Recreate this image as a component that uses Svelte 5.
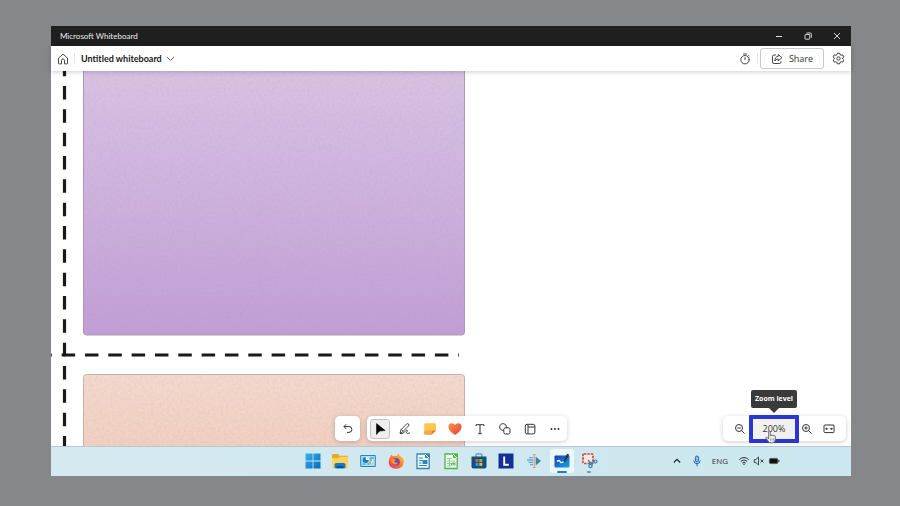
<script>
  let selected = $state('select');
  const tools = ['select', 'pen', 'note', 'reaction', 'text', 'shape', 'template', 'more'];
  const apps = ['start', 'files', 'control', 'firefox', 'writer', 'calc', 'store', 'l', 'mirror', 'whiteboard', 'snip'];
</script>

<svelte:head><title>Microsoft Whiteboard</title></svelte:head>

<div class="desktop">
  <main class="window">
    <div class="titlebar">
      <span class="grow">Microsoft Whiteboard</span>
      <button aria-label="Minimize"><svg width="10" height="10" viewBox="0 0 10 10"><path d="M2 5.500h6" stroke="#ddd" /></svg></button>
      <button aria-label="Restore"><svg width="10" height="10" viewBox="0 0 10 10" fill="none" stroke="#e8e8e8" stroke-width=".9"><rect x="2" y="3.500" width="4.700" height="4.700" rx=".6" /><path d="M3.500 2h3.800q1 0 1 1v3.800" /></svg></button>
      <button aria-label="Close"><svg width="10" height="10" viewBox="0 0 10 10"><path d="M2 2l6 6M8 2l-6 6" stroke="#e8e8e8" stroke-width=".9" /></svg></button>
    </div>

    <header>
      <button class="home" aria-label="Home"><svg width="12" height="12" viewBox="0 0 12 12" fill="none" stroke="#333" stroke-width=".9" stroke-linejoin="round"><path d="M1.500 5.100 6 1l4.500 4.100v5.200q0 .6-.6.6H7.500V7.500Q7.500 6 6 6T4.500 7.500v3.400H2.100q-.6 0-.6-.6z" /></svg></button>
      <i class="rule"></i>
      <button class="name"><b>Untitled whiteboard</b><svg width="9" height="9" viewBox="0 0 9 9"><path d="m1 3 3.500 3.500L8 3" fill="none" stroke="#555" stroke-width=".9" /></svg></button>
      <span class="grow"></span>
      <button class="timer" aria-label="Timer"><svg width="12" height="12" viewBox="0 0 12 12" fill="none" stroke="#333" stroke-width=".9" stroke-linecap="round"><circle cx="6" cy="6.700" r="4.200" /><path d="M6 4.500v2.300M4.500 1h3M9.400 2.200l.9.9" /></svg></button>
      <i class="rule"></i>
      <button class="share"><svg width="12" height="12" viewBox="0 0 12 12" fill="none" stroke="#333" stroke-width=".9" stroke-linejoin="round"><path d="M5 2H3Q1.500 2 1.500 3.500v5.500Q1.500 10.500 3 10.500h5.500Q10 10.500 10 9V8.300" /><path d="M7.200 1.500 11 4.700 7.200 7.800V6Q4.900 5.900 3.800 8 3.800 3.600 7.200 3.400z" /></svg>Share</button>
      <button class="settings" aria-label="Settings"><svg width="13" height="13" viewBox="0 0 13 13" fill="none" stroke="#333" stroke-width=".95" stroke-linejoin="round"><path d="m5.300 1.200h2.400l.4 1.500 1 .6 1.500-.5 1.200 2.100-1.100 1.100v1l1.100 1.100-1.200 2.100-1.500-.5-1 .6-.4 1.500H5.300l-.4-1.500-1-.6-1.500.5-1.200-2.100L2.300 7V6L1.200 4.900l1.200-2.100 1.500.5 1-.6z" /><circle cx="6.500" cy="6.500" r="1.700" /></svg></button>
    </header>

    <section class="board" aria-label="Whiteboard canvas">
      <svg class="drawing" width="420" height="100%" aria-hidden="true">
        <defs>
          <linearGradient id="purple" x1="0" y1="0" x2="0" y2="1"><stop stop-color="#dac5e5" /><stop offset=".5" stop-color="#ceb3de" /><stop offset="1" stop-color="#c29ed6" /></linearGradient>
          <linearGradient id="peach" x1="0" y1="0" x2="0" y2="1"><stop stop-color="#f4dacd" /><stop offset="1" stop-color="#f0cab8" /></linearGradient>
          <filter id="paper" x="0" y="0" width="100%" height="100%"><feTurbulence type="fractalNoise" baseFrequency=".37" numOctaves="3" seed="9" /><feColorMatrix values="0 0 0 0 .4  0 0 0 0 .25  0 0 0 0 .4  .22 0 0 0 -.07" /><feComposite in2="SourceAlpha" operator="in" /></filter>
        </defs>
        <rect x="32.500" y="-20" width="381" height="284" rx="3" fill="url(#purple)" stroke="#ae98b8" />
        <rect x="33" y="-20" width="380" height="284" rx="3" filter="url(#paper)" />
        <rect x="32.500" y="303.500" width="381" height="120" rx="3" fill="url(#peach)" stroke="#c5b1a8" />
        <rect x="33" y="304" width="380" height="119" rx="3" filter="url(#paper)" />
        <path d="M13.500-8.300V400" stroke="#191919" stroke-width="3.200" stroke-dasharray="13.500 9.830" />
        <path d="M-12.700 284H408" stroke="#191919" stroke-width="3.200" stroke-dasharray="13.500 9.830" />
      </svg>

      <div class="docks">
        <div class="dock undo"><button aria-label="Undo"><svg width="12" height="12" viewBox="0 0 12 12" fill="none" stroke="#333"><path d="M4.200 1.300 1.900 3.600l2.300 2.300M2 3.600h5a2.900 2.900 0 0 1 0 5.800H5" /></svg></button></div>
        <div class="dock tools">
          {#each tools as tool}
            <button aria-label={tool} class:selected={selected === tool} onclick={() => (selected = tool)}>
              <svg width="14" height="14" viewBox="0 0 14 14" fill="none" stroke="#333" stroke-linejoin="round">
                {#if tool === 'select'}<path d="M3.500 1.500v11L6.600 9l5.600-.5z" fill="#000" stroke="#000" stroke-width=".5" />
                {:else if tool === 'pen'}<path d="m2 11.500.8-3.600L8.600 2q1-.8 1.900 0t0 1.900L4.800 9.700zM3.300 7.600l1.900 1.900M2 11.500q2.300.7 4.300-1.200l2-2q1-.8 1.100.2T8.200 10.700q.8 1.500 3.800.2" stroke-width=".9" />
                {:else if tool === 'note'}<path d="M2.500 1.200h9.200q1.300 0 1.300 1.300v6L8.700 12.800H2.500q-1.300 0-1.300-1.300v-9q0-1.300 1.300-1.300z" fill="#fbc74a" stroke="none" /><path d="M1.200 9v2.500q0 1.300 1.300 1.300h6.200L9 9q0-1 1-1l3-.2" fill="#f7a650" stroke="none" /><path d="M13 8.500 8.700 12.800V10q0-1.500 1.500-1.500z" fill="#ee743e" stroke="none" />
                {:else if tool === 'reaction'}<defs><linearGradient id="love" x2="1" y2="1"><stop stop-color="#f59745" /><stop offset="1" stop-color="#e83b3e" /></linearGradient></defs><path d="M7 13Q.4 8.800.4 4.700.4 1.400 3.600 1.200 5.800 1.100 7 3q1.200-1.900 3.400-1.800 3.200.2 3.200 3.500Q13.600 8.800 7 13z" fill="url(#love)" stroke="none" />
                {:else if tool === 'text'}<path d="M3 4V2.700h8V4M7 2.700v9M5.200 11.700h3.600" />
                {:else if tool === 'shape'}<path d="M4.100 8.300A3.400 3.400 0 1 1 8.300 4.100" /><rect x="5.800" y="5.800" width="6.200" height="6.200" rx="1.700" /><path d="M4.100 8.300h1.700M8.300 4.100v1.700" />
                {:else if tool === 'template'}<rect x="2.300" y="2.300" width="9.600" height="9.600" rx="1.700" /><path d="M5 2.300v9.600M5 5h6.900" />
                {:else}<g fill="#222" stroke="none"><circle cx="3.500" cy="7" r=".9" /><circle cx="7" cy="7" r=".9" /><circle cx="10.500" cy="7" r=".9" /></g>{/if}
              </svg>
            </button>
          {/each}
        </div>
      </div>

      <div class="dock zoom">
        <button aria-label="Zoom out"><svg width="12" height="12" viewBox="0 0 12 12" fill="none" stroke="#333"><circle cx="5" cy="5" r="3.500" /><path d="m7.600 7.600 3 3M3.300 5h3.400" /></svg></button>
        <div class="level">
          <button class="percent" aria-describedby="tip">200%</button>
          <span class="tip" id="tip" role="tooltip">Zoom level</span>
          <span class="marker"></span>
          <svg class="cursor" width="12" height="14" viewBox="0 0 12 14" aria-hidden="true"><path d="M3.600 8V2q0-1 .8-1t.9 1v4q.1-1 .9-1t.9 1q.1-.8.8-.8t.9 1q.1-.7.8-.6t.8 1V9q0 4-3.500 4Q4 13 3 11L1.100 8.500q-.6-1 .2-1.300.8-.2 2.300 1.800z" fill="#eee" stroke="#555" stroke-width=".8" stroke-linejoin="round" /><path d="M5.500 8.500v2.200M7 8.500v2.200M8.500 8.500v2.200" stroke="#777" stroke-width=".6" /></svg>
        </div>
        <button aria-label="Zoom in"><svg width="12" height="12" viewBox="0 0 12 12" fill="none" stroke="#333"><circle cx="5" cy="5" r="3.500" /><path d="m7.600 7.600 3 3M3.300 5h3.400M5 3.300v3.400" /></svg></button>
        <button class="fit" aria-label="Fit to screen"><svg width="12" height="12" viewBox="0 0 12 12" fill="none" stroke="#333"><rect x="1" y="2" width="10" height="7.600" rx="1" /><path d="M2.500 5.800h2.700M6.800 5.800h2.700" stroke-width=".9" /><path d="m2.200 5.800 1.700-1.300v2.600zM9.800 5.800 8.100 4.500v2.600z" fill="#333" stroke="none" /></svg></button>
      </div>
    </section>

    <footer>
      <nav class="apps" aria-label="Taskbar">
        {#each apps as app}
          <button aria-label={app} class={app}>
            <svg width="18" height="18" viewBox="0 0 18 18">
              {#if app === 'start'}<defs><linearGradient id="win" x2="1" y2="1"><stop stop-color="#38b4ee" /><stop offset="1" stop-color="#0868bd" /></linearGradient></defs><path d="M1.500 1.500h7.100v7.100H1.500zM9.400 1.500h7.100v7.100H9.400zM1.500 9.400h7.100v7.100H1.500zM9.400 9.400h7.100v7.100H9.400z" fill="url(#win)" />
              {:else if app === 'files'}<path d="M1 3q0-1 1-1h5l1.500 1.700H16q1 0 1 1V9H1z" fill="#e6a82d" /><path d="M1 15.500V6.200h6l1.500-1.500H17v10.800q0 .8-.8.800H1.800q-.8 0-.8-.8z" fill="#ffd25c" /><path d="M3.500 16.300v-3.500q0-1.800 1.800-1.800h7.400q1.800 0 1.800 1.800v3.500z" fill="#137bc9" /><path d="M5.500 14h7v2.300h-7z" fill="#075594" />
              {:else if app === 'control'}<rect x="1.200" y="3" width="15.600" height="12" rx="1" fill="#2c83b9" /><rect x="2.200" y="4" width="13.600" height="10" fill="#a9e1f7" /><circle cx="6.700" cy="8" r="3" fill="#147bc0" /><path d="M6.700 8V4.700A3.300 3.300 0 0 1 10 8z" fill="#fff" /><path d="M3.500 12h3M8.500 12h2M11 6h4M11 8h3" stroke="#298bc4" /><circle cx="12" cy="10.800" r="1.500" fill="#e8842c" /><path d="m12 12 2-5" stroke="#fff" />
              {:else if app === 'firefox'}<defs><linearGradient id="fox" x1="1" y1="0" x2=".1" y2="1"><stop stop-color="#ffe047" /><stop offset=".45" stop-color="#ff8a20" /><stop offset="1" stop-color="#ef2e65" /></linearGradient></defs><path d="M3.300 4.700 4 2.500l2 1.800Q8 3.400 10 4q-.5-1.700 1-3 .7 2.200 3 3.500 3 2 2.800 5.500-.4 6.500-7.600 6.700Q2 16.500 1.600 10.200q-.1-3 1.700-5.500z" fill="url(#fox)" /><circle cx="9" cy="9.700" r="3.800" fill="#7544be" /><path d="M4 7.300q2.500-.8 5 .5L7.300 9.200q.8 2 3.800 1.200-1 2.600-3.800 2Q4.600 11.600 4 7.300z" fill="#ff9d27" />
              {:else if app === 'writer' || app === 'calc'}
                {@const color = app === 'writer' ? '#3287b9' : '#4db943'}
                <path d="M3 2h8l4.200 4.200v10.300H3z" fill="#f2faf8" stroke={color} stroke-width="1.300" /><path d="M11 1.300V6h5V1.300z" fill={color} /><path d="M11 2l4 4" stroke="#e7f8f5" />
                {#if app === 'writer'}<path d="M5 6h4M5 8.500h8M5 11h2.500M5 13.500h8" stroke={color} /><path d="M8.500 8h5v4h-5z" fill={color} />{:else}<path d="M5 6.500h5M5 9h8M5 11.500h8M5 14h4M7.500 6v8" stroke="#8acc83" stroke-width=".9" /><path d="M9.500 13.500v-2M11.200 13.500V10M13 13.500v-3" stroke="#57a74f" />{/if}
              {:else if app === 'store'}<path d="M6 5V3q0-1.200 1.200-1.200h3.600Q12 1.800 12 3v2" fill="none" stroke="#4697cb" stroke-width="1.200" /><path d="M1.500 4.500h15v10q0 2-2 2h-11q-2 0-2-2z" fill="#154e7d" /><path d="M5.500 7h3v3h-3z" fill="#ef5a32" /><path d="M9.300 7h3v3h-3z" fill="#83bc38" /><path d="M5.500 10.800h3v3h-3z" fill="#28a7e6" /><path d="M9.300 10.800h3v3h-3z" fill="#f6b92e" />
              {:else if app === 'l'}<path d="M1.500 1.500h15v15h-15z" fill="#152e94" /><path d="M7.200 4.500v8.300h4.600" fill="none" stroke="#fff" stroke-width="1.900" />
              {:else if app === 'mirror'}<path d="M4 5.700h4M2 8h6M3.500 10.300H8M5 12.600h3" stroke="#62a9da" stroke-width="1.300" /><path d="M10.700 4.500 16 9l-5.300 4.500z" fill="#4180ae" /><path d="M9.200 2.500v13M7.700 2.500h3M7.700 15.500h3" stroke="#ec9580" stroke-width="1.200" />
              {:else if app === 'whiteboard'}<defs><linearGradient id="board" x2="1" y2="1"><stop stop-color="#123faf" /><stop offset="1" stop-color="#16a6ee" /></linearGradient></defs><rect x="1.500" y="3.500" width="15" height="12" rx="1" fill="url(#board)" /><path d="M4 9.500q2-2 3 0t3 .5l2-1" fill="none" stroke="#fff" stroke-width="1.300" /><path d="m10.400 9.800 3.700-8 2.200 1-4.300 7.500z" fill="#283142" />
              {:else}<rect x="3" y="2" width="10" height="9.500" rx="1" fill="#f9e8e4" stroke="#c94639" stroke-width="1.700" stroke-dasharray="2.400 1" /><path d="m8 8 4.500 5M14.500 9.500 8 11.500" stroke="#527a92" stroke-width="1.200" /><circle cx="15.500" cy="9.500" r="1.500" fill="none" stroke="#2387ca" stroke-width="1.200" /><circle cx="10.500" cy="14" r="1.600" fill="none" stroke="#2387ca" stroke-width="1.200" />{/if}
            </svg>
          </button>
        {/each}
      </nav>
      <div class="tray">
        <button aria-label="Show hidden icons"><svg width="10" height="10" viewBox="0 0 10 10"><path d="m1.800 6.500 3.200-3.200 3.200 3.200" fill="none" stroke="#222" stroke-width="1.100" /></svg></button>
        <button aria-label="Microphone"><svg width="10" height="12" viewBox="0 0 10 12" fill="none" stroke="#2466ad"><rect x="3.400" y="1" width="3.200" height="6" rx="1.600" fill="#82bde9" /><path d="M1.800 5.500q0 3.200 3.200 3.200t3.200-3.200M5 8.700v2.500" /></svg></button>
        <button class="lang">ENG</button>
        <button class="status" aria-label="Network, volume and battery">
          <svg width="12" height="12" viewBox="0 0 12 12" fill="none" stroke="#333"><path d="M1.300 4.500q4.700-4 9.400 0M2.800 6.300q3.200-2.800 6.400 0M4.300 8q1.700-1.400 3.400 0" /><circle cx="6" cy="9.300" r=".7" fill="#222" stroke="none" /></svg>
          <svg width="12" height="12" viewBox="0 0 12 12" fill="none" stroke="#333" stroke-width=".9"><path d="M1.300 4.500h1.600L5.500 2v8L2.900 7.500H1.300zM7.500 4.500l3 3M10.500 4.500l-3 3" /></svg>
          <svg width="12" height="12" viewBox="0 0 12 12"><rect x="1.400" y="3.400" width="8.400" height="5.200" rx="1.300" fill="#111" stroke="#555" stroke-width=".8" /><path d="M10.900 5v2" stroke="#222" /></svg>
        </button>
      </div>
    </footer>
  </main>
</div>

<style>
  :global(body) { margin: 0; }
  * { box-sizing: border-box; }
  .desktop { min-height: 100vh; display: flex; padding: 26px 49px 30px 51px; background: #86878b; font: 9px/12px "Open Sans", "Noto Sans", sans-serif; color: #333; }
  .window { flex: 1; min-width: 0; display: flex; flex-direction: column; background: #fff; }
  button { display: flex; align-items: center; justify-content: center; border: 0; padding: 0; background: none; color: inherit; font: inherit; }
  svg { display: block; flex: none; }
  .grow { flex: 1; }
  .titlebar { height: 20px; display: flex; align-items: center; padding-left: 9px; background: #201f1f; color: #eee; font: 8px/12px Lato, "Open Sans", sans-serif; }
  .titlebar button { width: 29px; height: 20px; }
  header { position: relative; z-index: 2; height: 25px; display: flex; align-items: center; padding: 0 6px; background: #fff; box-shadow: 0 1px 5px #0003; }
  .rule { width: 1px; height: 11px; background: #e5e5e5; }
  .home { width: 12px; margin-right: 5px; }
  .name { gap: 4px; padding-left: 6px; color: #181818; font-family: Lato, "Open Sans", sans-serif; }
  .timer { width: 12px; margin-right: 6px; }
  .share { width: 64px; height: 21px; gap: 6px; margin: 0 8px 0 2px; border: 1px solid #c9c9c9; border-radius: 3px; }
  .settings { width: 13px; }
  .board { position: relative; flex: 1; }
  .drawing { position: absolute; inset: 0 auto 0 0; overflow: hidden; }
  .docks { position: absolute; inset: auto 0 5px; display: flex; justify-content: center; gap: 7px; }
  .dock { display: flex; align-items: center; height: 25px; border-radius: 5px; background: #fff; box-shadow: 0 1px 5px #0003; }
  .undo button { width: 25px; height: 25px; }
  .tools { gap: 5px; padding: 0 2px 0 3px; }
  .tools button { width: 20px; height: 20px; border: 1px solid transparent; border-radius: 3px; }
  .tools .selected { background: #eee; border-color: #c2c2c2; }
  .zoom { position: absolute; right: 5px; bottom: 5px; gap: 6px; padding: 0 11px; }
  .level { position: relative; margin-left: 1px; }
  .fit { margin-left: 4px; }
  .percent { width: 42px; height: 20px; background: #f1f1f1; color: #333; }
  .marker { position: absolute; inset: -4px; border: 4px solid #2a36ce; border-radius: 1px; pointer-events: none; }
  .tip { position: absolute; bottom: 31px; left: 50%; transform: translateX(-50%); width: 46px; height: 18px; border-radius: 2px; background: #3a3a3a; color: #fff; font: bold 7px/18px "Open Sans", sans-serif; text-align: center; white-space: nowrap; }
  .tip::after { content: ""; position: absolute; left: 18px; top: 18px; border: 5px solid transparent; border-top-color: #3a3a3a; border-bottom: 0; }
  .cursor { position: absolute; left: 12px; top: 11px; }
  footer { height: 30px; display: grid; grid-template-columns: 1fr 304px 1fr; background: linear-gradient(90deg, #d5e9f1, #cce7ef); box-shadow: inset 0 1px #b5c9d0; }
  .apps { grid-column: 2; display: grid; grid-template-columns: repeat(11, 1fr); align-items: center; justify-items: center; }
  .apps button { position: relative; width: 24px; height: 24px; border-radius: 3px; }
  .apps .whiteboard { background: #edf7fa; }
  .whiteboard::after, .snip::after { content: ""; position: absolute; bottom: 0; left: 7px; width: 10px; height: 2px; border-radius: 1px; background: #1683c9; }
  .snip::after { left: 10px; width: 4px; background: #83939a; }
  .tray { display: flex; align-items: center; justify-content: flex-end; gap: 10px; padding-right: 71px; }
  .lang { font: 8px/12px "Open Sans", "Noto Sans", sans-serif; }
  .status { gap: 3px; }
</style>
